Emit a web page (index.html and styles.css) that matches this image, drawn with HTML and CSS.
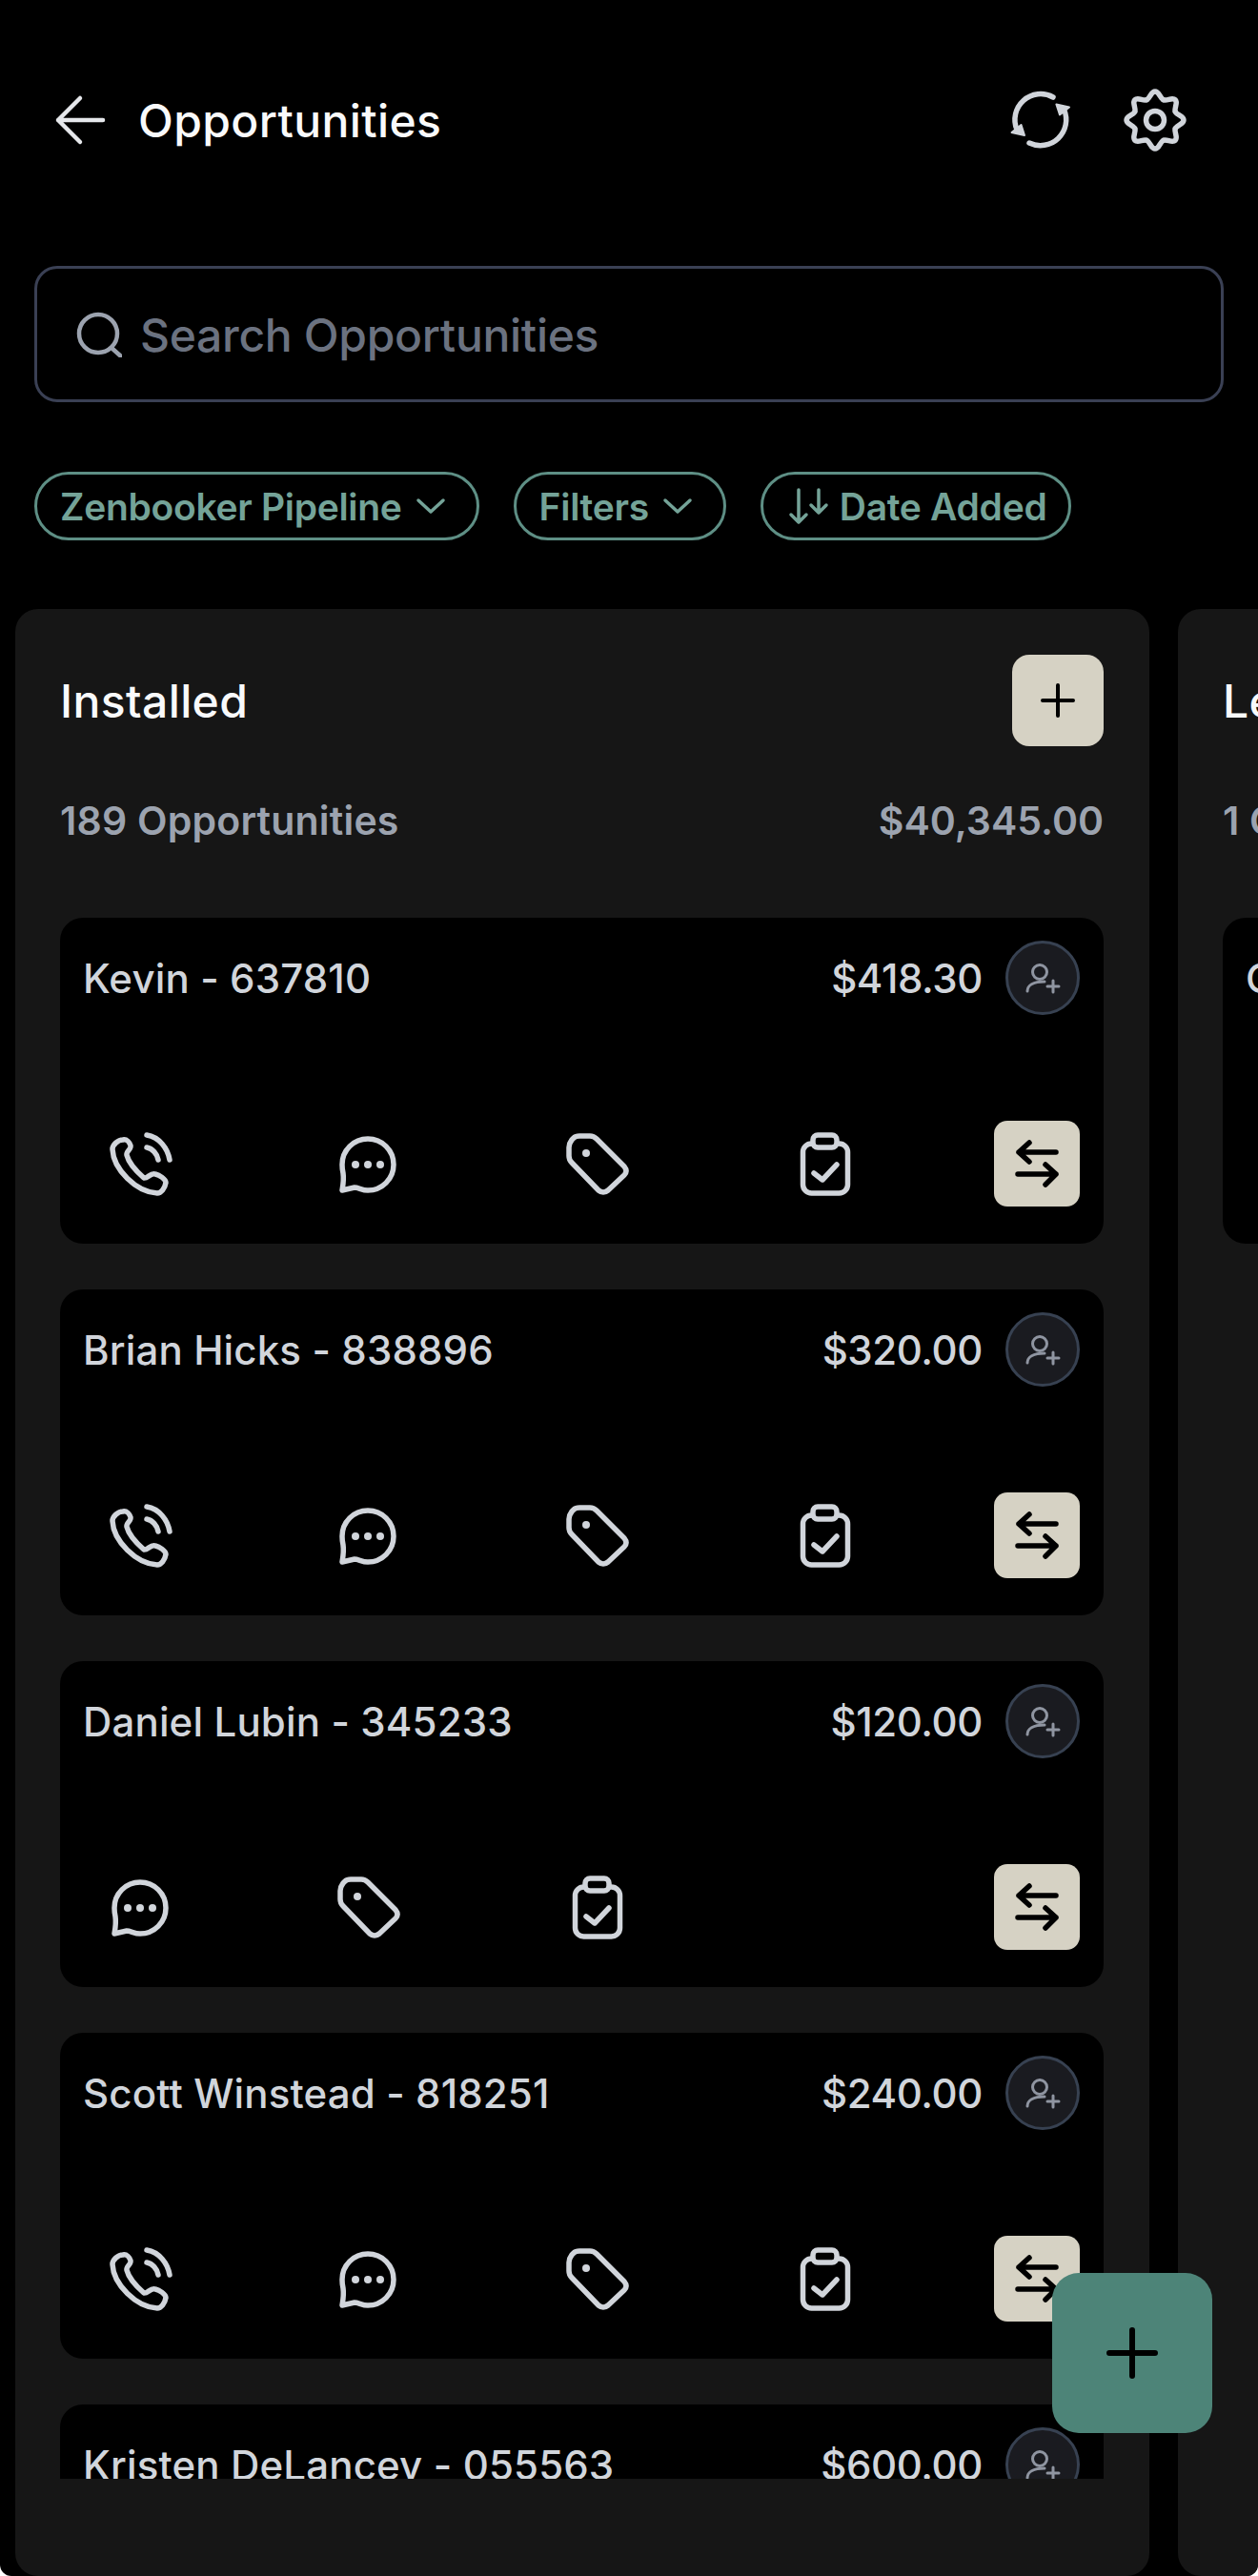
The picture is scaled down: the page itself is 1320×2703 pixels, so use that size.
FILE: index.html
```html
<!DOCTYPE html>
<html lang="en">
<head>
	<meta charset="UTF-8">
	<title>Opportunities</title>
	<link rel="stylesheet" href="styles.css">
</head>
<body>
	<svg class="sprite" xmlns="http://www.w3.org/2000/svg">
		<symbol id="i-phone" viewBox="0 0 72 72">
			<path d="M18 11C22 10 25 14 26 17C27 21 21 23 22 27C24 35 32 44 40 51C44 52 47 45 52 47C56 48 63 52 63 56C62 62 58 67 54 67C32 66 8 42 7 21C7 16 13 11 18 11Z"/>
			<path d="M43 6C56 8 65 20 67 32M43 19C49 20 54 26 55 32"/>
		</symbol>
		<symbol id="i-chat" viewBox="0 0 72 72">
			<path d="M36 10C51 10 63 22 63 37C63 52 51 64 36 64C30 64 26 61 22 61L9 64C10 58 11 53 10 46C9 42 9 40 9 37C9 22 21 10 36 10Z"/>
			<circle class="dot" cx="23" cy="37" r="4"/>
			<circle class="dot" cx="36" cy="37" r="4"/>
			<circle class="dot" cx="49" cy="37" r="4"/>
		</symbol>
		<symbol id="i-tag" viewBox="0 0 72 72">
			<path d="M7 19Q7 15 10 11L12 9Q14 7 18 7L29 7Q33 7 36 10L65 39Q69 44 65 48L48 64Q43 68 38 64L10 35Q7 32 7 28Z"/>
			<circle class="dot" cx="25" cy="25" r="4"/>
		</symbol>
		<symbol id="i-clip" viewBox="0 0 72 72">
			<rect x="13.5" y="15" width="47" height="52" rx="9"/>
			<rect x="24" y="6" width="25" height="13" rx="5" fill="#000"/>
			<path d="M25 46L34 53L49 37"/>
		</symbol>
		<symbol id="i-swap" viewBox="0 0 90 90">
			<path d="M26 33H65M37 23L26 33L37 43M25 56H65M54 46L65 56L54 67"/>
		</symbol>
		<symbol id="i-user" viewBox="0 0 78 78">
			<circle cx="36" cy="33" r="7.5"/>
			<path d="M23 53C23 47 29 43 41 43M50 42V54M44 48H56"/>
		</symbol>
		<symbol id="i-plus" viewBox="0 0 48 48">
			<path d="M24 8V40M8 24H40"/>
		</symbol>
		<symbol id="i-down" viewBox="0 0 36 36">
			<path d="M5 12L18 24L31 12"/>
		</symbol>
		<symbol id="i-lobe" viewBox="0 0 72 72">
			<path d="M27.2 14.75C31 13.2 31.5 6 36 6C40.5 6 41 13.2 44.8 14.75"/>
		</symbol>
	</svg>

	<header class="topbar">
		<svg class="icon-lg back" viewBox="0 0 72 72"><path d="M13 36H60M36 13L13 36L36 59"/></svg>
		<h1>Opportunities</h1>
		<div class="topbar-actions">
			<svg class="icon-lg" viewBox="0 0 72 72">
				<path d="M49 12A27 27 0 0 0 11 46M24 60A27 27 0 0 0 60.5 25"/>
				<path class="solid" d="M5.5 49L19 52L15.5 41ZM66 22.5L52.4 19.4L56 30.4Z"/>
			</svg>
			<svg class="icon-lg" viewBox="0 0 72 72">
				<use href="#i-lobe"/>
				<use href="#i-lobe" transform="rotate(45 36 36)"/>
				<use href="#i-lobe" transform="rotate(90 36 36)"/>
				<use href="#i-lobe" transform="rotate(135 36 36)"/>
				<use href="#i-lobe" transform="rotate(180 36 36)"/>
				<use href="#i-lobe" transform="rotate(225 36 36)"/>
				<use href="#i-lobe" transform="rotate(270 36 36)"/>
				<use href="#i-lobe" transform="rotate(315 36 36)"/>
				<circle cx="36" cy="36" r="9.5"/>
			</svg>
		</div>
	</header>

	<div class="search">
		<svg class="search-icon" viewBox="0 0 48 48"><circle cx="23" cy="23" r="20"/><path d="M37 38L47 47"/></svg>
		<span>Search Opportunities</span>
	</div>

	<div class="chips">
		<div class="chip">Zenbooker Pipeline <svg class="chev"><use href="#i-down"/></svg></div>
		<div class="chip">Filters <svg class="chev"><use href="#i-down"/></svg></div>
		<div class="chip chip-sort">
			<svg class="sort-icon" viewBox="0 0 48 48"><path d="M13 7V41M5 33L13 41L21 33M34 7V31M26 23L34 31L42 23"/></svg>
			Date Added
		</div>
	</div>

	<main class="board">
		<section class="column">
			<div class="column-head">
				<h2>Installed</h2>
				<button class="add-btn"><svg class="icon-plus"><use href="#i-plus"/></svg></button>
			</div>
			<div class="column-stats">
				<span class="count">189 Opportunities</span>
				<span>$40,345.00</span>
			</div>
			<div class="cards">
				<article class="card">
					<div class="card-top">
						<span class="name">Kevin - 637810</span>
						<span class="price">$418.30</span>
						<span class="assign"><svg><use href="#i-user"/></svg></span>
					</div>
					<div class="card-actions">
						<span class="act"><svg><use href="#i-phone"/></svg></span>
						<span class="act"><svg><use href="#i-chat"/></svg></span>
						<span class="act"><svg><use href="#i-tag"/></svg></span>
						<span class="act"><svg><use href="#i-clip"/></svg></span>
						<button class="swap"><svg><use href="#i-swap"/></svg></button>
					</div>
				</article>
				<article class="card">
					<div class="card-top">
						<span class="name">Brian Hicks - 838896</span>
						<span class="price">$320.00</span>
						<span class="assign"><svg><use href="#i-user"/></svg></span>
					</div>
					<div class="card-actions">
						<span class="act"><svg><use href="#i-phone"/></svg></span>
						<span class="act"><svg><use href="#i-chat"/></svg></span>
						<span class="act"><svg><use href="#i-tag"/></svg></span>
						<span class="act"><svg><use href="#i-clip"/></svg></span>
						<button class="swap"><svg><use href="#i-swap"/></svg></button>
					</div>
				</article>
				<article class="card">
					<div class="card-top">
						<span class="name">Daniel Lubin - 345233</span>
						<span class="price">$120.00</span>
						<span class="assign"><svg><use href="#i-user"/></svg></span>
					</div>
					<div class="card-actions">
						<span class="act"><svg><use href="#i-chat"/></svg></span>
						<span class="act"><svg><use href="#i-tag"/></svg></span>
						<span class="act"><svg><use href="#i-clip"/></svg></span>
						<button class="swap"><svg><use href="#i-swap"/></svg></button>
					</div>
				</article>
				<article class="card">
					<div class="card-top">
						<span class="name">Scott Winstead - 818251</span>
						<span class="price">$240.00</span>
						<span class="assign"><svg><use href="#i-user"/></svg></span>
					</div>
					<div class="card-actions">
						<span class="act"><svg><use href="#i-phone"/></svg></span>
						<span class="act"><svg><use href="#i-chat"/></svg></span>
						<span class="act"><svg><use href="#i-tag"/></svg></span>
						<span class="act"><svg><use href="#i-clip"/></svg></span>
						<button class="swap"><svg><use href="#i-swap"/></svg></button>
					</div>
				</article>
				<article class="card">
					<div class="card-top">
						<span class="name">Kristen DeLancey - 055563</span>
						<span class="price">$600.00</span>
						<span class="assign"><svg><use href="#i-user"/></svg></span>
					</div>
				</article>
			</div>
		</section>

		<section class="column">
			<div class="column-head">
				<h2>Leads</h2>
			</div>
			<div class="column-stats">
				<span class="count">1 Opportunity</span>
			</div>
			<div class="cards">
				<article class="card">
					<div class="card-top">
						<span class="name">Customer</span>
					</div>
					<div class="card-actions"></div>
				</article>
			</div>
		</section>
	</main>

	<button class="fab"><svg><use href="#i-plus"/></svg></button>
</body>
</html>
```

FILE: styles.css
```css
html{
	background: #fff;
}
body{
	margin: 0;
	width: 1320px;
	height: 2703px;
	position: relative;
	overflow: hidden;
	background: #000;
	border-radius: 0 0 12px 12px;
	font-family: Inter, "Liberation Sans", sans-serif;
}
.sprite{
	display: none;
}
svg{
	fill: none;
	stroke: currentColor;
	stroke-linecap: round;
	stroke-linejoin: round;
	stroke-width: 5.5;
	display: block;
	flex: none;
}
svg .dot{
	fill: currentColor;
	stroke: none;
}
svg .solid{
	fill: currentColor;
	stroke-width: 2;
}
button{
	border: 0;
	padding: 0;
	font: inherit;
}

.topbar{
	display: flex;
	align-items: center;
	height: 72px;
	padding: 90px 72px 0 48px;
	color: #d1d5db;
}
.back{
	color: #e5e7eb;
	stroke-width: 4.5;
}
.topbar h1{
	margin: 0 0 0 25px;
	font-size: 48px;
	font-weight: 500;
	letter-spacing: 0.4px;
	color: #f9fafb;
}
.topbar-actions{
	margin-left: auto;
	display: flex;
	gap: 48px;
}
.icon-lg{
	width: 72px;
	height: 72px;
}

.search{
	margin: 117px 36px 0;
	height: 143px;
	box-sizing: border-box;
	border: 3px solid #3a4054;
	border-radius: 24px;
	padding: 1px 0 0 41px;
	display: flex;
	align-items: center;
	gap: 19px;
	font-size: 48px;
	font-weight: 500;
	letter-spacing: -0.3px;
	color: #6b7280;
}
.search-icon{
	width: 48px;
	height: 48px;
	color: #9ca3af;
	stroke-width: 4.5;
}

.chips{
	display: flex;
	gap: 36px;
	margin: 73px 36px 0;
}
.chip{
	height: 72px;
	box-sizing: border-box;
	border: 3px solid #5e8f85;
	border-radius: 36px;
	padding: 0 30px 0 24px;
	display: flex;
	align-items: center;
	gap: 12px;
	font-size: 39px;
	font-weight: 600;
	letter-spacing: -0.3px;
	color: #74a398;
}
.chip-sort{
	padding: 0 23px 0 24px;
	gap: 8px;
}
.chev{
	width: 36px;
	height: 36px;
	stroke-width: 3.5;
}
.sort-icon{
	width: 48px;
	height: 48px;
	stroke-width: 3.5;
}

.board{
	display: flex;
	gap: 30px;
	margin: 72px 0 0 16px;
}
.column{
	flex: none;
	width: 1190px;
	height: 2064px;
	box-sizing: border-box;
	padding: 48px 48px 102px 47px;
	background: #161616;
	border-radius: 24px;
	display: flex;
	flex-direction: column;
}
.column-head{
	display: flex;
	justify-content: space-between;
	align-items: center;
	height: 96px;
}
.column-head h2{
	margin: 0;
	font-size: 48px;
	font-weight: 500;
	letter-spacing: 0.4px;
	color: #f9fafb;
}
.add-btn{
	width: 96px;
	height: 96px;
	border-radius: 18px;
	background: #d6d2c4;
	color: #000;
	display: flex;
	align-items: center;
	justify-content: center;
}
.icon-plus{
	width: 48px;
	height: 48px;
	stroke-width: 4;
}
.column-stats{
	display: flex;
	justify-content: space-between;
	margin-top: 53px;
	height: 50px;
	line-height: 50px;
	font-size: 41px;
	font-weight: 600;
	color: #9ca3af;
}
.count{
	letter-spacing: 0.2px;
}
.cards{
	margin-top: 77px;
	flex: 1;
	overflow: hidden;
	display: flex;
	flex-direction: column;
	gap: 48px;
}
.card{
	flex: none;
	height: 342px;
	box-sizing: border-box;
	padding: 24px 25px 39px 24px;
	background: #000;
	border-radius: 24px;
	color: #d1d5db;
}
.card-top{
	display: flex;
	align-items: center;
	gap: 24px;
	height: 78px;
	font-size: 42px;
	font-weight: 500;
}
.name{
	margin-right: auto;
	letter-spacing: 0.15px;
}
.price{
	letter-spacing: -0.4px;
}
.assign{
	width: 78px;
	height: 78px;
	box-sizing: border-box;
	border: 3px solid #374151;
	border-radius: 50%;
	background: #1a1b20;
	color: #8f95a1;
	display: flex;
	align-items: center;
	justify-content: center;
}
.assign svg{
	width: 78px;
	height: 78px;
	stroke-width: 3;
	flex: none;
}
.card-actions{
	display: flex;
	align-items: center;
	margin-top: 111px;
	height: 90px;
}
.act{
	width: 239.5px;
	display: flex;
	justify-content: center;
}
.act svg{
	width: 72px;
	height: 72px;
}
.act:first-child{
	margin-left: -60px;
}
.swap{
	margin-left: auto;
	width: 90px;
	height: 90px;
	border-radius: 14px;
	background: #d6d2c4;
	color: #000;
}
.swap svg{
	width: 90px;
	height: 90px;
}

.fab{
	position: absolute;
	left: 1104px;
	top: 2385px;
	width: 168px;
	height: 168px;
	border-radius: 28px;
	background: #4d8478;
	color: #000;
	display: flex;
	align-items: center;
	justify-content: center;
}
.fab svg{
	width: 72px;
	height: 72px;
	stroke-width: 4;
}
```
